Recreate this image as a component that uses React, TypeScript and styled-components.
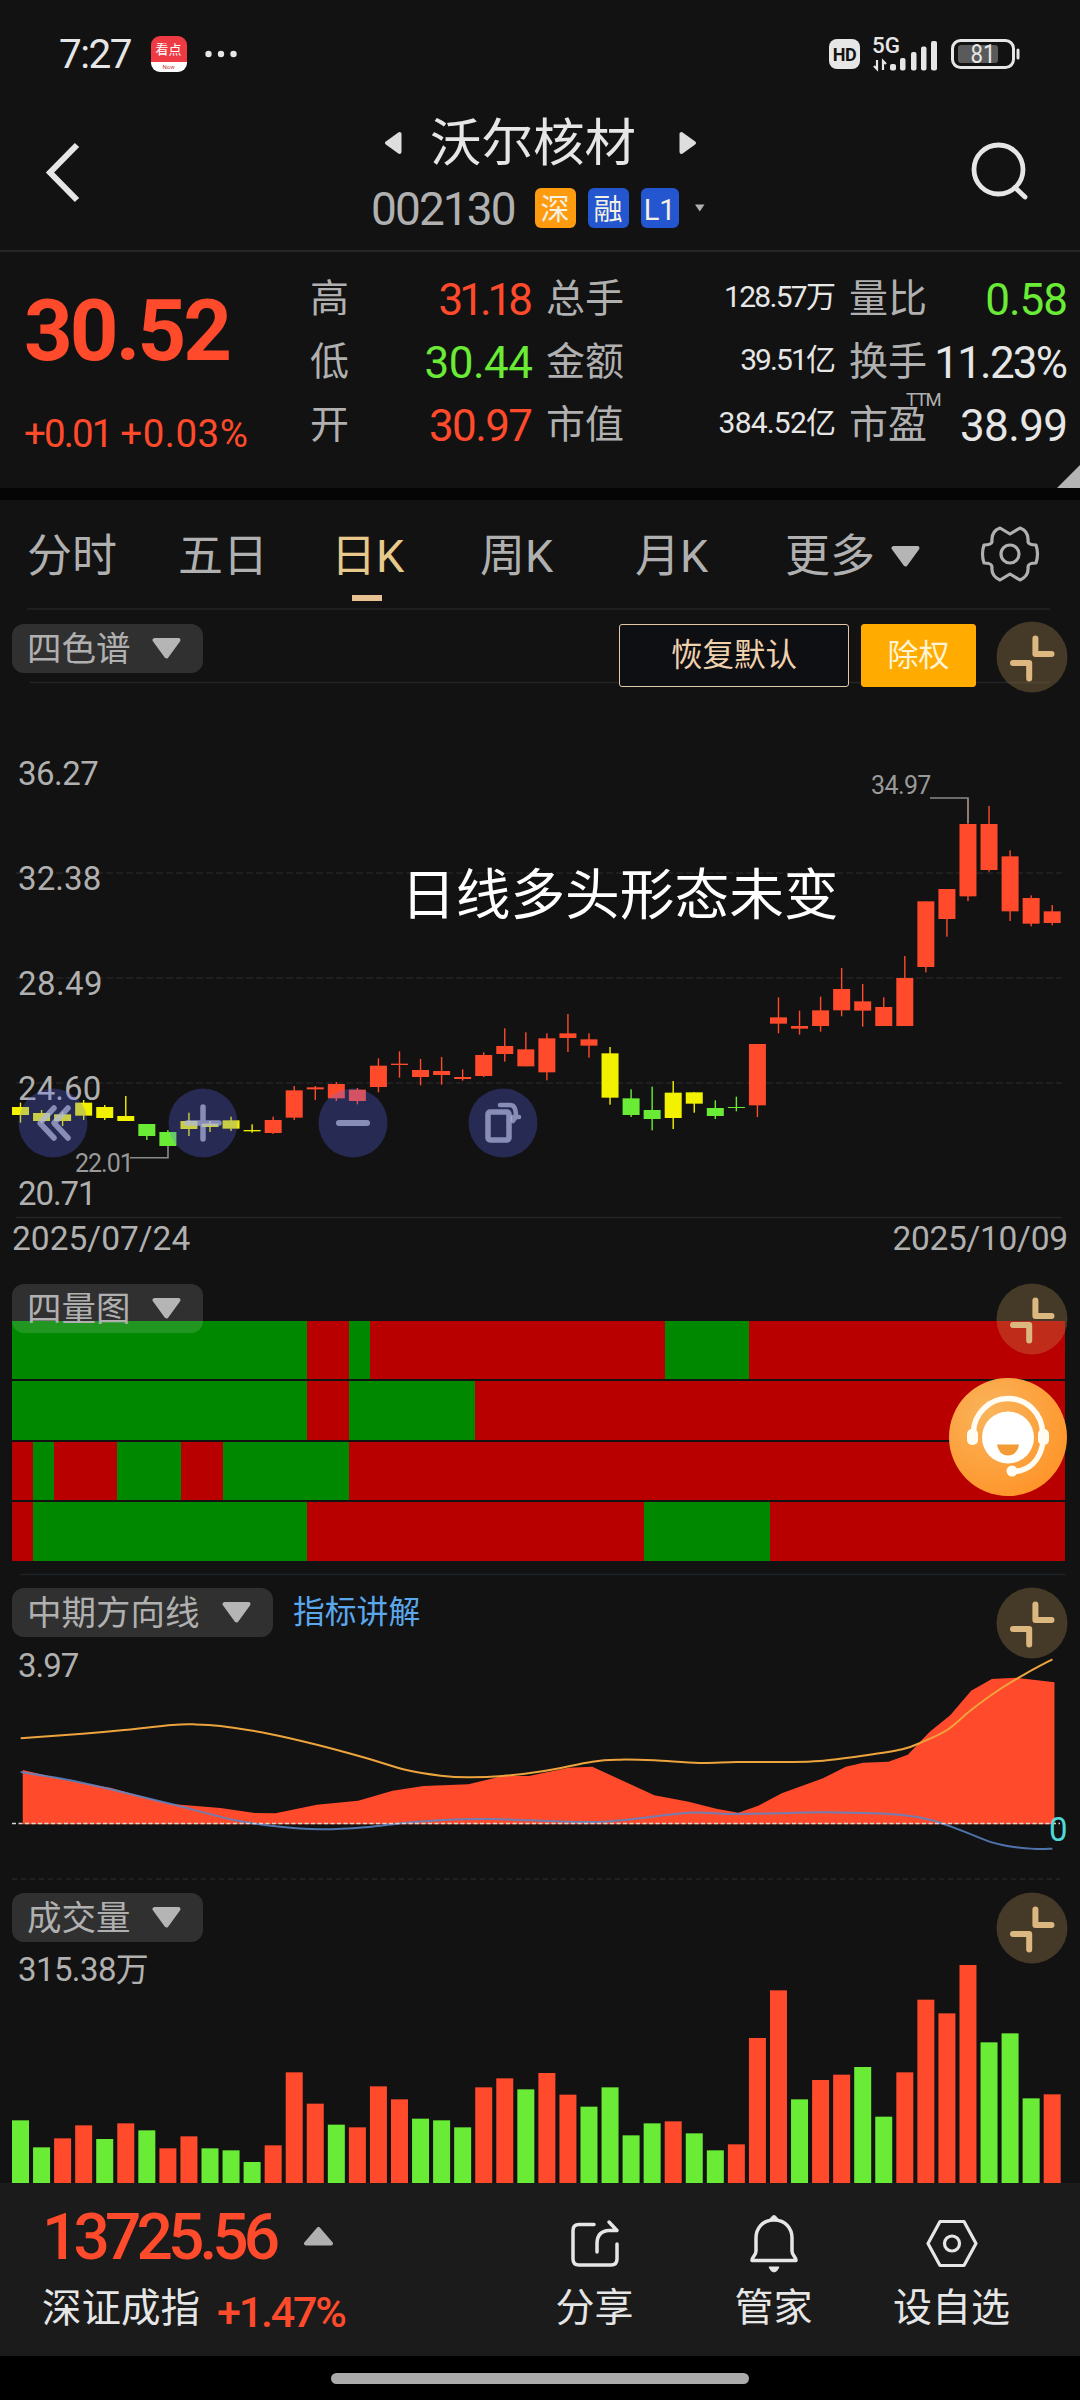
import React from "react";
import styled, { createGlobalStyle } from "styled-components";

const RED = "#ff4a2b";
const GREEN = "#6aeb36";
const YELLOW = "#f2f200";
const GREY = "#b0b0b0";
const WHITE = "#e6e6e6";
const SAND = "#dcb880";

const Global = createGlobalStyle`
  * { box-sizing: border-box; }
  body { margin: 0; background: #121212; }
`;

const Screen = styled.div`
  width: 1080px;
  height: 2400px;
  display: flex;
  flex-direction: column;
  overflow: hidden;
  background: #121212;
  color: ${GREY};
  font-family: Roboto, "Noto Sans CJK SC", sans-serif;
  line-height: 1;
  white-space: nowrap;
`;

const Txt = styled.span<{ $s: number; $c?: string; $ls?: number; $w?: number; $dy?: number }>`
  display: block;
  font-size: ${(p) => p.$s}px;
  line-height: 1;
  font-weight: ${(p) => p.$w ?? 400};
  color: ${(p) => p.$c ?? GREY};
  letter-spacing: ${(p) => p.$ls ?? 0}px;
  margin-right: ${(p) => -(p.$ls ?? 0)}px;
  transform: translateY(${(p) => p.$dy ?? 0}px);
`;

/* Status bar */
const StatusBar = styled.div`
  height: 108px;
  padding: 0 60px 0 59px;
  display: flex;
  align-items: center;
  justify-content: space-between;
`;
const StatusSide = styled.div`
  display: flex;
  align-items: center;
`;
const NewsIcon = styled.div`
  width: 36px;
  height: 36px;
  margin: 0 18px 0 18px;
  border-radius: 9px;
  overflow: hidden;
  display: flex;
  flex-direction: column;
  align-items: center;
  background: linear-gradient(#ee3a42 0 72%, #ffffff 72%);
  span:first-child {
    color: #fff;
    font-size: 13px;
    line-height: 27px;
  }
  span:last-child {
    color: #c33;
    font-size: 6px;
    line-height: 8px;
  }
`;
const HdBadge = styled.div`
  width: 31px;
  height: 30px;
  border-radius: 8px;
  background: ${WHITE};
  color: #121212;
  font-size: 18px;
  line-height: 31px;
  font-weight: 700;
  text-align: center;
  letter-spacing: -0.5px;
`;
const StatusIcon = styled.svg`
  margin-left: 11px;
`;

/* Title bar */
const TitleBar = styled.header`
  height: 144px;
  padding: 0 0 21px;
  display: grid;
  grid-template-columns: 260px 1fr 260px;
  align-items: end;
  border-bottom: 2px solid #262626;
`;
const Center = styled.div`
  display: flex;
  flex-direction: column;
`;
const NameRow = styled.div`
  display: flex;
  align-items: center;
  height: 60px;
  padding-left: 124px;
`;
const Name = styled.div`
  margin: 0 43px 0 28px;
`;
const CodeRow = styled.div`
  display: flex;
  align-items: center;
  height: 40px;
  margin-top: 15px;
  margin-bottom: 1px;
  padding-left: 111px;
`;
const Badge = styled.div<{ $bg: string; $w: number; $ml: number }>`
  width: ${(p) => p.$w}px;
  height: 40px;
  margin-left: ${(p) => p.$ml}px;
  border-radius: 6px;
  background: ${(p) => p.$bg};
  color: #f4f1e4;
  font-size: 29px;
  line-height: 44px;
  text-align: center;
`;

/* Quote summary */
const Quote = styled.section`
  position: relative;
  height: 236px;
  padding-right: 12px;
  display: grid;
  grid-template-columns: 310px 1fr;
`;
const PriceBlock = styled.div`
  padding: 37px 0 0 24px;
`;
const Changes = styled.div`
  display: flex;
  gap: 7px;
  margin-top: 41px;
`;
const Stats = styled.div`
  padding-top: 16px;
  display: grid;
  grid-template-columns: 60px 163px 13px 100px 190px 13px 76px 1fr;
  grid-auto-rows: 63px;
  align-items: center;
`;
const Value = styled.div`
  display: flex;
  justify-content: flex-end;
`;
const Label = styled.div`
  position: relative;
`;
const Ttm = styled.div`
  position: absolute;
  left: 57px;
  top: -15px;
  z-index: 1;
`;
const Fold = styled.div`
  position: absolute;
  right: 0;
  bottom: 0;
  width: 23px;
  height: 23px;
  background: #b4b4b4;
  clip-path: polygon(100% 0, 100% 100%, 0 100%);
`;
const Band = styled.div`
  height: 12px;
  background: #050505;
`;

/* Period tabs */
const Tabs = styled.nav`
  height: 110px;
  margin: 0 30px 0 27px;
  display: grid;
  grid-template-columns: 151px 153px 149px 155px 150px 195px 1fr;
  align-items: center;
  border-bottom: 2px solid #1f1f1f;
`;
const Tab = styled.div`
  height: 108px;
  display: flex;
  flex-direction: column;
  padding-top: 34px;
`;
const TabRow = styled.div`
  display: flex;
  align-items: center;
  gap: 16px;
`;
const Underline = styled.div`
  width: 30px;
  height: 6px;
  margin: 16px 0 0 21px;
  background: #e8c192;
`;

/* Chart panels */
const Panel = styled.section<{ $h: number }>`
  position: relative;
  height: ${(p) => p.$h}px;
`;
const Chart = styled.svg`
  display: block;
  width: 1080px;
  height: 100%;
`;
const Overlay = styled.div<{ $x: number; $y: number }>`
  position: absolute;
  left: ${(p) => p.$x}px;
  top: ${(p) => p.$y}px;
  display: flex;
  align-items: center;
`;
const Chip = styled.div<{ $w: number }>`
  width: ${(p) => p.$w}px;
  height: 49px;
  padding: 0 22px 0 15px;
  border-radius: 12px;
  display: flex;
  align-items: center;
  justify-content: space-between;
  background: rgba(255, 255, 255, 0.13);
`;
const Button = styled.div<{ $w: number; $solid?: boolean }>`
  width: ${(p) => p.$w}px;
  height: 63px;
  margin-right: 12px;
  display: flex;
  align-items: center;
  justify-content: center;
  border-radius: 3px;
  border: 1.500px solid ${(p) => (p.$solid ? "#ffab00" : "#e3c9a8")};
  background: ${(p) => (p.$solid ? "#ffab00" : "#0e0f12")};
`;
const Spread = styled.div`
  position: absolute;
  left: 12px;
  right: 12px;
  bottom: 5px;
  display: flex;
  justify-content: space-between;
`;

/* Four-row heat strip */
const Heat = styled.div`
  padding: 61px 15px 0 12px;
  display: flex;
  flex-direction: column;
  gap: 2px;
`;
const HeatRow = styled.div`
  height: 58.400px;
  display: flex;
`;
const HeatCell = styled.div<{ $up: boolean }>`
  background: ${(p) => (p.$up ? "#b80000" : "#008800")};
`;

/* Bottom bar */
const Bottom = styled.footer`
  height: 173px;
  display: grid;
  grid-template-columns: 507px 175px 183px 173px;
  background: #1b1b1b;
`;
const IndexBox = styled.div`
  padding: 23px 0 0 42px;
`;
const IndexRow = styled.div<{ $gap: number; $mt?: number }>`
  display: flex;
  align-items: center;
  gap: ${(p) => p.$gap}px;
  margin-top: ${(p) => p.$mt ?? 0}px;
`;
const Action = styled.div`
  display: flex;
  flex-direction: column;
  align-items: center;
  padding-top: 30px;
  gap: 16px;
`;
const HomeBar = styled.div`
  height: 44px;
  display: flex;
  justify-content: center;
  align-items: center;
  background: #000;
`;
const Pill = styled.div`
  width: 418px;
  height: 11px;
  border-radius: 6px;
  background: #ababab;
`;

/* Candles: [body top, body bottom, wick top, wick bottom], three units per pixel. */
type Candle = [number, number, number, number, string];
const R = RED, G = GREEN, Y = YELLOW;
const candles: Candle[] = [
  [1101, 1125, 1088, 1148, Y], [1119, 1143, 1110, 1150, Y], [1123, 1143, 1115, 1158, Y],
  [1088, 1127, 1080, 1140, Y], [1101, 1134, 1095, 1140, Y], [1128, 1143, 1068, 1143, Y],
  [1152, 1188, 1152, 1200, G], [1176, 1218, 1170, 1218, G], [1143, 1167, 1118, 1188, Y],
  [1151, 1161, 1143, 1176, Y], [1141, 1166, 1130, 1173, Y], [1170, 1174, 1153, 1178, Y],
  [1140, 1179, 1130, 1182, R], [1051, 1133, 1038, 1140, R], [1042, 1048, 1038, 1080, R],
  [1032, 1075, 1026, 1083, R], [1049, 1083, 1044, 1093, R], [977, 1041, 955, 1057, R],
  [971, 975, 934, 1013, R], [990, 1011, 957, 1036, R], [993, 1005, 951, 1034, R],
  [1011, 1017, 988, 1022, R], [945, 1008, 937, 1011, R], [918, 942, 865, 965, R],
  [928, 979, 877, 979, R], [895, 997, 880, 1021, R], [880, 894, 822, 936, R],
  [898, 917, 880, 953, R], [940, 1073, 921, 1094, Y], [1075, 1125, 1048, 1131, G],
  [1110, 1137, 1040, 1171, G], [1058, 1134, 1023, 1167, Y], [1057, 1091, 1057, 1118, Y],
  [1104, 1128, 1081, 1137, G], [1101, 1104, 1070, 1114, G], [912, 1096, 912, 1131, R],
  [832, 851, 772, 880, R], [858, 866, 812, 884, R], [811, 858, 770, 875, R],
  [747, 811, 684, 829, R], [784, 812, 732, 860, R], [801, 858, 772, 858, R],
  [714, 858, 648, 858, R], [484, 681, 484, 697, R], [447, 537, 447, 590, R],
  [252, 469, 175, 483, R], [252, 390, 198, 395, R], [349, 514, 331, 543, R],
  [474, 551, 466, 559, R], [514, 549, 495, 556, R],
];

const volumes: [number, string][] = [
  [721, G], [802, G], [775, R], [736, R], [777, G], [730, R], [751, G], [805, R], [769, R], [805, G],
  [811, G], [846, G], [796, R], [577, R], [671, R], [734, G], [742, R], [619, R], [658, R], [716, G],
  [721, G], [742, G], [622, R], [595, R], [628, G], [579, R], [644, R], [680, G], [622, G], [766, G],
  [730, G], [724, R], [760, G], [811, G], [793, R], [474, R], [331, R], [658, G], [600, R], [584, R],
  [561, G], [710, G], [577, R], [359, R], [400, R], [255, R], [487, G], [460, G], [655, G], [643, R],
];

/* Run lengths in trading days; negative runs are green. */
const heat: number[][] = [
  [-14, 2, -1, 14, -4, 15],
  [-14, 2, -6, 28],
  [1, -1, 3, -3, 2, -6, 34],
  [1, -13, 16, -6, 14],
];

type Pt = [number, number];
const goldLine: Pt[] = [
  [30, 535], [120, 521], [180, 510], [250, 495], [280, 493], [320, 498], [390, 521], [460, 554],
  [530, 593], [590, 630], [640, 647], [680, 652], [730, 648], [790, 633], [860, 605], [900, 599],
  [950, 601], [1015, 609], [1070, 606], [1140, 606], [1190, 603], [1250, 588], [1310, 568],
  [1340, 545], [1375, 510], [1410, 450], [1450, 390], [1490, 340], [1528, 298],
];
const blueLine: Pt[] = [
  [30, 636], [100, 660], [165, 690], [250, 733], [340, 780], [400, 799], [465, 808], [530, 802],
  [590, 788], [650, 779], [710, 777], [770, 781], [860, 786], [920, 777], [1000, 758], [1060, 762],
  [1130, 760], [1200, 757], [1310, 765], [1360, 785], [1400, 815], [1440, 847], [1475, 862],
  [1505, 867], [1528, 866],
];
const area: Pt[] = [
  [33, 630], [100, 662], [160, 683], [245, 731], [320, 744], [370, 759], [400, 760], [460, 734],
  [520, 722], [570, 692], [615, 678], [680, 673], [730, 648], [768, 648], [825, 623], [860, 620],
  [950, 706], [1000, 725], [1040, 746], [1072, 758], [1100, 738], [1135, 700], [1195, 655],
  [1228, 620], [1253, 608], [1290, 605], [1318, 584], [1350, 515], [1380, 465], [1410, 392],
  [1440, 357], [1475, 353], [1531, 367], [1531, 793], [33, 793],
];

const toPx = ([x, y]: Pt): Pt => [x / 1.4519, y / 3];

function smooth(raw: Pt[]): string {
  const p = raw.map(toPx);
  let d = `M${p[0][0]} ${p[0][1]}`;
  for (let i = 0; i < p.length - 1; i++) {
    const a = p[i - 1] ?? p[i], b = p[i], c = p[i + 1], e = p[i + 2] ?? c;
    d += `C${b[0] + (c[0] - a[0]) / 6} ${b[1] + (c[1] - a[1]) / 6} ${c[0] - (e[0] - b[0]) / 6} ${c[1] - (e[1] - b[1]) / 6} ${c[0]} ${c[1]}`;
  }
  return d;
}

const barX = (i: number) => 12 + i * 21.055;

const Down = ({ w = 29, h = 21 }: { w?: number; h?: number }) => (
  <svg width={w} height={h} viewBox="0 0 29 21">
    <path d="M2.500 2H26.500L14.500 18.500Z" fill="#b5b5b5" stroke="#b5b5b5" strokeWidth="4" strokeLinejoin="round" />
  </svg>
);

const Expand = () => (
  <svg width="72" height="72" viewBox="-36 -36 72 72">
    <circle r="35.500" fill="rgba(216,170,100,0.26)" />
    <path d="M3.400 -18.500V-3H19.500M-19 6H-2.800V21.500" fill="none" stroke={SAND} strokeWidth="6" strokeLinecap="round" strokeLinejoin="round" />
  </svg>
);

const Tool = ({ children }: { children: React.ReactNode }) => (
  <svg width="70" height="70" viewBox="-35 -35 70 70">
    <circle r="34.500" fill="rgba(94,109,255,0.275)" />
    <g fill="none" stroke="rgba(176,184,225,0.7)" strokeWidth="5.500" strokeLinecap="round" strokeLinejoin="round">
      {children}
    </g>
  </svg>
);

const PanelChip = ({ name, w = 191 }: { name: string; w?: number }) => (
  <Chip $w={w}>
    <Txt $s={34.5} $dy={1}>{name}</Txt>
    <Down />
  </Chip>
);

const stats: [string, string, string, number, string, string, number, string, string, string, number][] = [
  ["高", "31.18", RED, -4, "总手", "128.57万", -1.7, "量比", "0.58", GREEN, -1],
  ["低", "30.44", GREEN, -0.5, "金额", "39.51亿", -1.9, "换手", "11.23%", WHITE, -1.8],
  ["开", "30.97", RED, -1.6, "市值", "384.52亿", -0.8, "市盈", "38.99", WHITE, -0.6],
];

export default function App() {
  return (
    <Screen>
      <Global />
      <StatusBar>
        <StatusSide>
          <Txt $s={40.5} $c={WHITE} $ls={-1.5}>7:27</Txt>
          <NewsIcon><span>看点</span><span>Now</span></NewsIcon>
          <svg width="32" height="8" viewBox="0 0 32 8" fill={WHITE}>
            <circle cx="3.500" cy="4" r="3.200" /><circle cx="16" cy="4" r="3.200" /><circle cx="28.500" cy="4" r="3.200" />
          </svg>
        </StatusSide>
        <StatusSide>
          <HdBadge>HD</HdBadge>
          <StatusIcon width="68" height="52" viewBox="0 -8 68 52">
            <text x="1" y="17" fontSize="22" fontWeight="500" fill={WHITE} textLength="28" lengthAdjust="spacingAndGlyphs">5G</text>
            <path d="M6 24V33L3 30M12 34V25L15 28" stroke={WHITE} strokeWidth="2.200" fill="none" />
            <g fill={WHITE}>
              <rect x="19" y="28" width="6" height="6.500" rx="2" /><rect x="29" y="22" width="5.500" height="12.500" rx="2" />
              <rect x="40" y="16" width="5.500" height="18.500" rx="2" /><rect x="50" y="10.500" width="5.500" height="24" rx="2" />
              <rect x="60" y="5" width="6" height="29.500" rx="2" />
            </g>
          </StatusIcon>
          <StatusIcon width="70" height="32" viewBox="0 0 70 32">
            <rect x="2.500" y="2.500" width="61" height="27" rx="8" fill="none" stroke={WHITE} strokeWidth="3" />
            <rect x="8" y="7" width="40" height="18" rx="3" fill="#5a5a5a" />
            <path d="M68 12V20" stroke={WHITE} strokeWidth="3" strokeLinecap="round" />
            <text x="33" y="24.500" textAnchor="middle" fontSize="25" fill={WHITE} textLength="25" lengthAdjust="spacingAndGlyphs">81</text>
          </StatusIcon>
        </StatusSide>
      </StatusBar>

      <TitleBar>
        <svg width="100" height="120" viewBox="0 0 100 120">
          <path d="M77 36L50 63.500L77 91" fill="none" stroke={WHITE} strokeWidth="6" />
        </svg>
        <Center>
          <NameRow>
            <svg width="18" height="24" viewBox="0 0 18 24"><path d="M15.500 3V21L3 12Z" fill="#dedede" stroke="#dedede" strokeWidth="4" strokeLinejoin="round" /></svg>
            <Name><Txt $s={51.5} $c={WHITE} $dy={1}>沃尔核材</Txt></Name>
            <svg width="18" height="24" viewBox="0 0 18 24"><path d="M2.500 3V21L15 12Z" fill="#dedede" stroke="#dedede" strokeWidth="4" strokeLinejoin="round" /></svg>
          </NameRow>
          <CodeRow>
            <Txt $s={46} $ls={-1.9} $dy={1}>002130</Txt>
            <Badge $bg="#ff9b0f" $w={41} $ml={18}>深</Badge>
            <Badge $bg="#2356cf" $w={41} $ml={12}>融</Badge>
            <Badge $bg="#2356cf" $w={38} $ml={12}>L1</Badge>
            <svg width="26" height="10" viewBox="0 0 26 10"><path d="M16 1.500H25.500L20.800 8.500Z" fill={GREY} /></svg>
          </CodeRow>
        </Center>
        <svg width="260" height="120" viewBox="0 0 260 120">
          <g fill="none" stroke={WHITE} strokeWidth="4.800" strokeLinecap="round">
            <circle cx="178.500" cy="60.500" r="24.500" /><path d="M195 78.500L205 88" />
          </g>
        </svg>
      </TitleBar>

      <Quote>
        <PriceBlock>
          <Txt $s={85} $c={RED} $w={700} $ls={-2.9}>30.52</Txt>
          <Changes>
            <Txt $s={38.5} $c={RED} $ls={-1.9}>+0.01</Txt>
            <Txt $s={38.5} $c={RED} $ls={0.5}>+0.03%</Txt>
          </Changes>
        </PriceBlock>
        <Stats>
          {stats.map((s) => (
            <React.Fragment key={s[0]}>
              <Txt $s={39}>{s[0]}</Txt>
              <Value><Txt $s={44} $c={s[2]} $ls={s[3]}>{s[1]}</Txt></Value>
              <span />
              <Txt $s={39}>{s[4]}</Txt>
              <Value><Txt $s={30} $c={WHITE} $ls={s[6]} $dy={-3}>{s[5]}</Txt></Value>
              <span />
              <Label>
                <Txt $s={39}>{s[7]}</Txt>
                {s[7] === "市盈" && <Ttm><Txt $s={18.5} $ls={-1.3}>TTM</Txt></Ttm>}
              </Label>
              <Value><Txt $s={44} $c={s[9]} $ls={s[10]}>{s[8]}</Txt></Value>
            </React.Fragment>
          ))}
        </Stats>
        <Fold />
      </Quote>
      <Band />

      <Tabs>
        <Tab><Txt $s={45}>分时</Txt></Tab>
        <Tab><Txt $s={45}>五日</Txt></Tab>
        <Tab><Txt $s={45} $c="#e8c98c">日K</Txt><Underline /></Tab>
        <Tab><Txt $s={45}>周K</Txt></Tab>
        <Tab><Txt $s={45}>月K</Txt></Tab>
        <Tab><TabRow><Txt $s={45}>更多</Txt><Down /></TabRow></Tab>
        <svg width="60" height="60" viewBox="-30 -30 60 60">
          <g fill="none" stroke={GREY} strokeWidth="3.200" strokeLinejoin="round">
            <path d="M-10 -26L0 -20L10 -26Q19 -23 18 -12Q19 -9 26 -9Q29 0 26 9Q18 9 18 13Q19 22 10 26L0 20L-10 26Q-19 22 -18 13Q-18 9 -26 9Q-29 0 -26 -9Q-19 -9 -18 -12Q-19 -23 -10 -26Z" />
            <circle r="9" />
          </g>
        </svg>
      </Tabs>

      <Panel $h={650}>
        <Chart viewBox="0 610 1080 650">
          <g stroke="#242424" strokeWidth="1.500">
            <path d="M30 682.500H1050M16 1217.500H1062" />
            <path d="M16 873H1062M16 978H1062M16 1083H1062" strokeDasharray="7 3" />
          </g>
          {candles.map(([t, b, wt, wb, c], i) => (
            <g key={i} fill={c}>
              <rect x={barX(i)} y={740 + t / 3} width="17" height={(b - t) / 3} />
              <rect x={barX(i) + 7.8} y={740 + wt / 3} width="1.400" height={(wb - wt) / 3} />
            </g>
          ))}
          <path d="M130 1157.700H168V1146M930 798H968V823" fill="none" stroke="#8a8a8a" strokeWidth="1.600" />
        </Chart>
        <Overlay $x={12} $y={14}><PanelChip name="四色谱" /></Overlay>
        <Overlay $x={619} $y={14}>
          <Button $w={230}><Txt $s={31.5} $c="#f0d2ae">恢复默认</Txt></Button>
          <Button $w={115} $solid><Txt $s={31} $c="#fff4d8">除权</Txt></Button>
        </Overlay>
        <Overlay $x={996} $y={11}><Expand /></Overlay>
        <Overlay $x={18} $y={147}><Txt $s={33} $ls={-0.5}>36.27</Txt></Overlay>
        <Overlay $x={18} $y={252}><Txt $s={33} $ls={0.1}>32.38</Txt></Overlay>
        <Overlay $x={18} $y={357}><Txt $s={33} $ls={0.4}>28.49</Txt></Overlay>
        <Overlay $x={18} $y={462}><Txt $s={33} $ls={0.1}>24.60</Txt></Overlay>
        <Overlay $x={18} $y={567}><Txt $s={33} $ls={-1.1}>20.71</Txt></Overlay>
        <Overlay $x={75} $y={541}><Txt $s={25} $c="#999" $ls={-1}>22.01</Txt></Overlay>
        <Overlay $x={871} $y={163}><Txt $s={25} $c="#999" $ls={-0.6}>34.97</Txt></Overlay>
        <Overlay $x={401} $y={258}><Txt $s={54.7} $c="#fff">日线多头形态未变</Txt></Overlay>
        <Overlay $x={17.5} $y={478}><Tool><path d="M1 -15L-13 0L1 15M15 -15L1 0L15 15" /></Tool></Overlay>
        <Overlay $x={167.5} $y={478}><Tool><path d="M0 -16V16M-16 0H16" /></Tool></Overlay>
        <Overlay $x={317.5} $y={478}><Tool><path d="M-14 0H14" strokeWidth="6" /></Tool></Overlay>
        <Overlay $x={467.5} $y={478}>
          <Tool><rect x="-15" y="-11" width="21" height="28" rx="2" /><path d="M-3 -18H7Q13 -18 13 -7M13 -6L10 -2V-6H16Z" strokeWidth="4.500" /></Tool>
        </Overlay>
        <Spread>
          <Txt $s={33.5} $ls={0}>2025/07/24</Txt>
          <Txt $s={33.5} $ls={-0.3}>2025/10/09</Txt>
        </Spread>
      </Panel>

      <Panel $h={300}>
        <Heat>
          {heat.map((row, r) => (
            <HeatRow key={r}>
              {row.map((n, i) => (
                <HeatCell key={i} $up={n > 0} style={{ flexGrow: Math.abs(n) }} />
              ))}
            </HeatRow>
          ))}
        </Heat>
        <Overlay $x={12} $y={24}><PanelChip name="四量图" /></Overlay>
        <Overlay $x={996} $y={23}><Expand /></Overlay>
        <Overlay $x={948} $y={117}>
          <svg width="120" height="120" viewBox="-60 -60 120 120">
            <defs>
              <radialGradient id="help" cx="0.350" cy="0.300" r="0.800">
                <stop offset="0" stopColor="#f9b45c" /><stop offset="1" stopColor="#ff9326" />
              </radialGradient>
            </defs>
            <circle r="59" fill="url(#help)" />
            <g fill="none" stroke="#fffdf3" strokeWidth="5.500" strokeLinecap="round">
              <path d="M-34.500 -4A34.500 34.500 0 0 1 34.500 -4" />
              <path d="M34.500 8C31 24 21 33 7 34.500" />
            </g>
            <circle r="26" cy="0.500" fill="#fff" />
            <rect x="-41" y="-8" width="11" height="16" rx="5" fill="#fffdf3" />
            <rect x="30" y="-8" width="11" height="16" rx="5" fill="#fffdf3" />
            <circle cx="4" cy="34" r="5.500" fill="#fffdf3" />
            <path d="M-11 7.500H11Q9 18.500 0 18.500Q-9 18.500 -11 7.500Z" fill="#f49b35" />
          </svg>
        </Overlay>
      </Panel>

      <Panel $h={320}>
        <Chart viewBox="0 0 1080 320">
          <path d="M20 14.500H1066" stroke="#1e2226" strokeWidth="1.500" />
          <path d="M12 319H1060" stroke="#242424" strokeWidth="1.500" strokeDasharray="5 4" />
          <polygon points={area.map(toPx).join(" ")} fill={RED} />
          <path d={smooth(blueLine)} fill="none" stroke="#5a86c8" strokeOpacity="0.850" strokeWidth="2" />
          <path d={smooth(goldLine)} fill="none" stroke="#eea43c" strokeWidth="2" />
          <path d="M12 263.500H1060" stroke="#d8d8d0" strokeWidth="1.300" strokeDasharray="4 2.500" />
        </Chart>
        <Overlay $x={12} $y={28}><PanelChip name="中期方向线" w={261} /></Overlay>
        <Overlay $x={293} $y={37}><Txt $s={31.8} $c="#5aa7ec">指标讲解</Txt></Overlay>
        <Overlay $x={996} $y={27}><Expand /></Overlay>
        <Overlay $x={18} $y={89}><Txt $s={33} $ls={-1}>3.97</Txt></Overlay>
        <Overlay $x={1049} $y={253}><Txt $s={33} $c="#4fd8d8">0</Txt></Overlay>
      </Panel>

      <Panel $h={303}>
        <Chart viewBox="0 0 1080 303">
          {volumes.map(([t, c], i) => (
            <rect key={i} x={barX(i)} y={t / 3} width="17" height={303 - t / 3} fill={c} />
          ))}
        </Chart>
        <Overlay $x={12} $y={13}><PanelChip name="成交量" /></Overlay>
        <Overlay $x={996} $y={12}><Expand /></Overlay>
        <Overlay $x={18} $y={73}><Txt $s={33} $ls={-0.6}>315.38万</Txt></Overlay>
      </Panel>

      <Bottom>
        <IndexBox>
          <IndexRow $gap={23}>
            <Txt $s={64} $c={RED} $ls={-4.9} $w={500}>13725.56</Txt>
            <svg width="31" height="22" viewBox="0 0 31 22"><path d="M3 16.500H28L15.500 2Z" fill={GREY} stroke={GREY} strokeWidth="4" strokeLinejoin="round" /></svg>
          </IndexRow>
          <IndexRow $gap={17} $mt={17}>
            <Txt $s={39.5} $c={WHITE}>深证成指</Txt>
            <Txt $s={43} $c={RED} $ls={-2.2} $w={500} $dy={4}>+1.47%</Txt>
          </IndexRow>
        </IndexBox>
        <Action>
          <svg width="60" height="60" viewBox="-30 -30 60 60">
            <g fill="none" stroke={WHITE} strokeWidth="3.500" strokeLinecap="round" strokeLinejoin="round">
              <path d="M-1 -18.500H-16Q-22 -18.500 -22 -12.500V16Q-22 22 -16 22H16Q22 22 22 16V1" />
              <path d="M2 9V1Q2 -12 14 -12.500H21M14 -21L22 -12.500" />
            </g>
          </svg>
          <Txt $s={39} $c={WHITE}>分享</Txt>
        </Action>
        <Action>
          <svg width="60" height="60" viewBox="-30 -30 60 60">
            <g fill="none" stroke={WHITE} strokeWidth="3.500" strokeLinejoin="round">
              <path d="M0 -23C-12 -23 -18 -14 -18 -5V8C-18 13 -22 13 -22 17.500H22C22 13 18 13 18 8V-5C18 -14 12 -23 0 -23Z" />
            </g>
            <path d="M-4 -24Q0 -31 4 -24ZM-5 24H5Q3 29 0 29Q-3 29 -5 24Z" fill={WHITE} stroke={WHITE} />
          </svg>
          <Txt $s={39} $c={WHITE}>管家</Txt>
        </Action>
        <Action>
          <svg width="60" height="60" viewBox="-30 -30 60 60">
            <g fill="none" stroke={WHITE} strokeWidth="3.200" strokeLinejoin="round">
              <path d="M-12 -21.500H12L24 0.500L12 22.500H-12L-24 0.500Z" /><circle r="7.500" cy="0.500" />
            </g>
          </svg>
          <Txt $s={39} $c={WHITE}>设自选</Txt>
        </Action>
      </Bottom>
      <HomeBar><Pill /></HomeBar>
    </Screen>
  );
}
